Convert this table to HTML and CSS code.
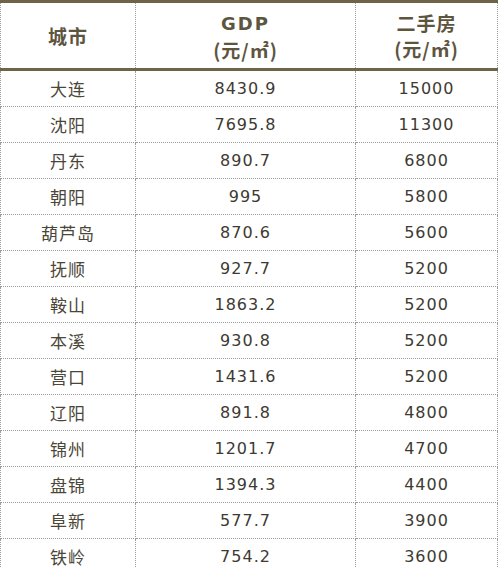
FILE: index.html
```html
<!DOCTYPE html>
<html lang="zh">
<head>
<meta charset="utf-8">
<link rel="stylesheet" href="styles.css">
</head>
<body>
<table class="data">
  <colgroup>
    <col class="c1"><col class="c2"><col class="c3">
  </colgroup>
  <thead>
    <tr>
      <th>城市</th>
      <th><span class="gdp">GDP</span><br>(元/㎡)</th>
      <th>二手房<br>(元/㎡)</th>
    </tr>
  </thead>
  <tbody>
    <tr><td>大连</td><td>8430.9</td><td>15000</td></tr>
    <tr><td>沈阳</td><td>7695.8</td><td>11300</td></tr>
    <tr><td>丹东</td><td>890.7</td><td>6800</td></tr>
    <tr><td>朝阳</td><td>995</td><td>5800</td></tr>
    <tr><td>葫芦岛</td><td>870.6</td><td>5600</td></tr>
    <tr><td>抚顺</td><td>927.7</td><td>5200</td></tr>
    <tr><td>鞍山</td><td>1863.2</td><td>5200</td></tr>
    <tr><td>本溪</td><td>930.8</td><td>5200</td></tr>
    <tr><td>营口</td><td>1431.6</td><td>5200</td></tr>
    <tr><td>辽阳</td><td>891.8</td><td>4800</td></tr>
    <tr><td>锦州</td><td>1201.7</td><td>4700</td></tr>
    <tr><td>盘锦</td><td>1394.3</td><td>4400</td></tr>
    <tr><td>阜新</td><td>577.7</td><td>3900</td></tr>
    <tr><td>铁岭</td><td>754.2</td><td>3600</td></tr>
  </tbody>
</table>
</body>
</html>
```
FILE: styles.css
```css
html, body {
  margin: 0;
  padding: 0;
  background: #ffffff;
}
.data {
  border-collapse: collapse;
  width: 497px;
  table-layout: fixed;
  font-family: "DejaVu Sans", "Noto Sans CJK SC", sans-serif;
  color: #3d3a32;
}
.c1 { width: 135px; }
.c2 { width: 220px; }
.c3 { width: 142px; }
.data th, .data td {
  border-left: 1px dotted #9c9c9c;
  border-right: 1px dotted #9c9c9c;
  text-align: center;
  padding: 0;
}
.data thead tr {
  border-top: 3px solid #6e6548;
  border-bottom: 3px solid #6e6548;
}
.data th {
  height: 65px;
  font-family: "Noto Sans CJK SC", sans-serif;
  font-weight: bold;
  font-size: 19px;
  line-height: 26px;
  letter-spacing: 1px;
  color: #5e553f;
}
.gdp {
  font-family: "DejaVu Sans", sans-serif;
  font-size: 18px;
  letter-spacing: 2px;
}
.data td {
  height: 35px;
  font-size: 16px;
  letter-spacing: 1px;
  border-bottom: 1px dotted #9c9c9c;
}
.data td:first-child {
  font-family: "Noto Sans CJK SC", sans-serif;
  font-size: 17px;
  letter-spacing: 1px;
  color: #4a4638;
}
```
